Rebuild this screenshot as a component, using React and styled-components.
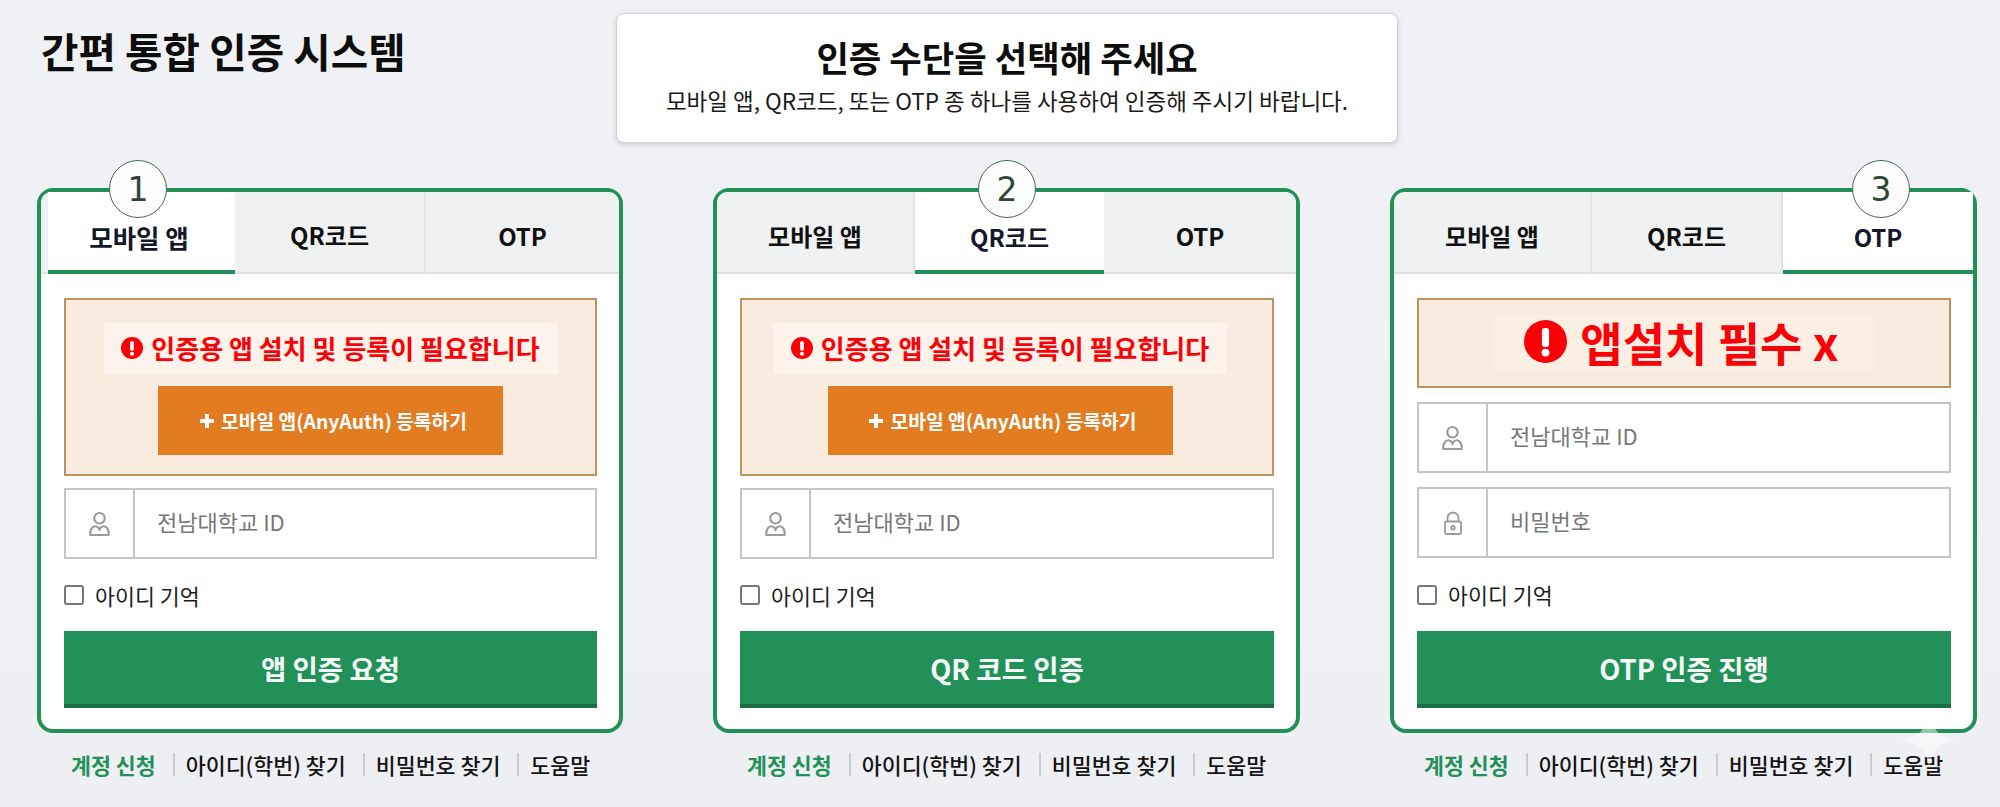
import React from "react";
import styled, { createGlobalStyle } from "styled-components";

const Global = createGlobalStyle`
  html, body { margin: 0; padding: 0; background: #eff0f3; }
  body { font-family: "Noto Sans CJK KR", "Noto Sans", sans-serif; overflow: hidden; }
  * { box-sizing: border-box; }
`;

const Page = styled.div`
  position: relative;
  width: 2000px;
  height: 807px;
  padding: 13px 23px 0 37px;
  background: linear-gradient(180deg, #f0f1f4 0%, #eeeff2 100%);
`;

const Header = styled.header`
  display: grid;
  grid-template-columns: 579px 782px;
  height: 175px;
  align-items: start;
`;

const PageTitle = styled.h1`
  margin: 13px 0 0 4px;
  font-size: 40.7px;
  line-height: 50px;
  font-weight: 700;
  color: #0d0d0d;
`;

const Notice = styled.div`
  height: 130px;
  background: #fff;
  border: 1px solid #d0d1d6;
  border-radius: 8px;
  box-shadow: 0 2px 5px rgba(60, 60, 70, 0.18);
  text-align: center;
  padding-top: 19px;
`;

const NoticeTitle = styled.h2`
  margin: 0;
  font-size: 35.3px;
  line-height: 48px;
  font-weight: 700;
  color: #0d0d0d;
`;

const NoticeText = styled.p`
  margin: 3px 0 0;
  font-size: 22.5px;
  line-height: 32px;
  font-weight: 400;
  color: #1a1a1a;
`;

const Columns = styled.div`
  display: grid;
  grid-template-columns: 586px 587px 587px;
  column-gap: 90px;
`;

const Card = styled.section`
  position: relative;
  height: 545px;
  background: #fff;
  border: 4px solid #23905a;
  border-radius: 16px;
  display: flex;
  flex-direction: column;
`;

const Badge = styled.div`
  position: absolute;
  top: -32px;
  left: ${(p) => p.$x - 33}px;
  width: 58px;
  height: 58px;
  border-radius: 50%;
  background: #fbfcfb;
  border: 1.5px solid #4d6558;
  color: #2c4639;
  font-family: "DejaVu Sans", sans-serif;
  font-size: 33px;
  display: flex;
  align-items: center;
  justify-content: center;
  z-index: 2;
`;

const Tabs = styled.div`
  display: grid;
  grid-template-columns: ${(p) => p.$cols};
  height: 82px;
  background: #f0f1f3;
  border-radius: 10px 10px 0 0;
  padding-left: ${(p) => p.$inset}px;
  box-shadow: inset 0 -2px 0 #e0e1e4;
`;

const Tab = styled.div`
  display: flex;
  align-items: center;
  justify-content: center;
  padding-top: ${(p) => (p.$raised ? 2 : p.$active ? 11 : 5)}px;
  padding-right: ${(p) => (p.$big ? 5 : 0)}px;
  font-size: ${(p) => (p.$big ? 25.5 : 24)}px;
  font-weight: 700;
  color: ${(p) => (p.$active ? "#14182a" : "#111")};
  background: ${(p) => (p.$active ? "#fff" : "transparent")};
  border-right: ${(p) => (p.$last || p.$active ? "none" : "2px solid #e2e3e6")};
  border-bottom: ${(p) => (p.$active ? "4px solid #23905a" : "none")};
`;

const Panel = styled.div`
  flex: 1;
  display: flex;
  flex-direction: column;
  padding: 24px 22px 21px 23px;
`;

const Alert = styled.div`
  height: ${(p) => (p.$large ? 90 : 178)}px;
  margin-bottom: ${(p) => (p.$large ? 14 : 12)}px;
  background: #faebdf;
  border: 2px solid #bb9560;
  display: flex;
  flex-direction: column;
  align-items: center;
  padding-top: ${(p) => (p.$large ? 15 : 23)}px;
  padding-right: ${(p) => p.$shift || 0}px;
`;

const AlertNote = styled.div`
  display: flex;
  align-items: center;
  justify-content: center;
  gap: ${(p) => (p.$large ? 13 : 8)}px;
  width: ${(p) => (p.$large ? 380 : 454)}px;
  height: ${(p) => (p.$large ? 56 : 51)}px;
  padding-bottom: ${(p) => (p.$large ? 4 : 2)}px;
  padding-right: ${(p) => (p.$large ? 5 : 0)}px;
  background: ${(p) => (p.$large ? "#fbeee3" : "#fdf3ea")};
  color: #fb0007;
  font-size: ${(p) => (p.$large ? 46 : 26)}px;
  font-weight: 700;
  white-space: nowrap;
`;

const RegisterButton = styled.div`
  margin-top: 12px;
  width: 345px;
  height: 69px;
  padding-left: 5px;
  background: #e37b20;
  color: #fff;
  font-size: 19.3px;
  font-weight: 700;
  display: flex;
  align-items: center;
  justify-content: center;
  gap: 6px;
`;

const Field = styled.div`
  display: grid;
  grid-template-columns: 69px 1fr;
  height: 71px;
  margin-bottom: ${(p) => (p.$stacked ? 14 : 0)}px;
  background: #fff;
  border: 2px solid #c4c5ca;
`;

const FieldIcon = styled.div`
  display: flex;
  align-items: center;
  justify-content: center;
  border-right: 2px solid #c4c5ca;
  color: #9a9a9e;
`;

const FieldText = styled.div`
  display: flex;
  align-items: center;
  padding: 0 0 5px 22px;
  font-size: 22px;
  font-weight: 400;
  color: #77777a;
`;

const Remember = styled.label`
  flex: 1;
  display: flex;
  align-items: center;
  gap: 11px;
  font-size: 21.7px;
  color: #1c1c1c;
`;

const Box = styled.span`
  width: 20px;
  height: 20px;
  background: #fff;
  border: 2px solid #77777a;
  border-radius: 3px;
`;

const Submit = styled.div`
  height: 77px;
  background: #229158;
  border-bottom: 4px solid #1d6d47;
  color: #f4faf6;
  font-size: 27.5px;
  font-weight: 700;
  display: flex;
  align-items: center;
  justify-content: center;
`;

const Links = styled.nav`
  display: flex;
  align-items: center;
  height: 24px;
  margin-top: 19px;
  padding-left: 34px;
  font-size: 21.7px;
  font-weight: 500;
  color: #141414;
  white-space: nowrap;
`;

const Signup = styled.span`
  color: #23905a;
  font-weight: 700;
`;

const Sep = styled.i`
  width: 2px;
  height: 23px;
  background: #cbccd0;
  margin: 0 11px 0 17px;
`;

const Sparkle = styled.svg`
  position: absolute;
  left: 1901px;
  top: 712px;
  opacity: 0.5;
`;

const WarnIcon = ({ size }) => (
  <svg width={size} height={size} viewBox="0 0 24 24">
    <circle cx="12" cy="12" r="12" fill="#fb0007" />
    <rect x="10" y="4.5" width="4" height="10.5" rx="1.6" fill="#fff" />
    <circle cx="12" cy="18.2" r="2.2" fill="#fff" />
  </svg>
);

const PlusIcon = () => (
  <svg width="16" height="16" viewBox="0 0 16 16">
    <path d="M6 1h4v5h5v4h-5v5H6v-5H1V6h5z" fill="#fff" />
  </svg>
);

const PersonIcon = () => (
  <svg width="21" height="24" viewBox="0 0 20 23" fill="none" stroke="currentColor" strokeWidth="2">
    <circle cx="10" cy="6" r="5" />
    <path d="M1.2 22C.8 17 3 13.6 6 13.6c2 0 4 2 4 3.9 0-1.9 2-3.9 4-3.9 3 0 5.200 3.400 4.800 8.400z" strokeLinejoin="round" />
  </svg>
);

const LockIcon = () => (
  <svg width="18" height="24" viewBox="0 0 18 24" fill="none" stroke="currentColor" strokeWidth="1.8">
    <path d="M3.500 10.500V7a5.500 5.500 0 0 1 11 0v3.500" />
    <rect x="1" y="10.500" width="16" height="12.500" rx="1.500" />
    <circle cx="9" cy="16.800" r="1.800" />
  </svg>
);

const tabNames = ["모바일 앱", "QR코드", "OTP"];

const cards = [
  { num: 1, badgeX: 101, active: 0, cols: "187px 191px 1fr", inset: 7, raised: 1, big: 0, submit: "앱 인증 요청" },
  { num: 2, badgeX: 294, active: 1, cols: "198px 189px 1fr", inset: 0, shift: 14, submit: "QR 코드 인증" },
  { num: 3, badgeX: 491, active: 2, cols: "198px 191px 1fr", inset: 0, submit: "OTP 인증 진행", otp: true },
];

function AuthCard({ card }) {
  return (
    <div>
      <Card>
        <Badge $x={card.badgeX}>{card.num}</Badge>
        <Tabs $cols={card.cols} $inset={card.inset}>
          {tabNames.map((name, i) => (
            <Tab
              key={name}
              $active={i === card.active}
              $last={i === 2}
              $raised={i === card.raised}
              $big={i === card.big}
            >
              {name}
            </Tab>
          ))}
        </Tabs>
        <Panel>
          {card.otp ? (
            <Alert $large>
              <AlertNote $large>
                <WarnIcon size={43} />
                앱설치 필수 x
              </AlertNote>
            </Alert>
          ) : (
            <Alert $shift={card.shift}>
              <AlertNote>
                <WarnIcon size={22} />
                인증용 앱 설치 및 등록이 필요합니다
              </AlertNote>
              <RegisterButton>
                <PlusIcon />
                모바일 앱(AnyAuth) 등록하기
              </RegisterButton>
            </Alert>
          )}
          <Field $stacked={card.otp}>
            <FieldIcon><PersonIcon /></FieldIcon>
            <FieldText>전남대학교 ID</FieldText>
          </Field>
          {card.otp && (
            <Field>
              <FieldIcon><LockIcon /></FieldIcon>
              <FieldText>비밀번호</FieldText>
            </Field>
          )}
          <Remember>
            <Box />
            아이디 기억
          </Remember>
          <Submit>{card.submit}</Submit>
        </Panel>
      </Card>
      <Links>
        <Signup>계정 신청</Signup>
        <Sep />
        아이디(학번) 찾기
        <Sep />
        비밀번호 찾기
        <Sep />
        도움말
      </Links>
    </div>
  );
}

export default function App() {
  return (
    <Page>
      <Global />
      <Header>
        <PageTitle>간편 통합 인증 시스템</PageTitle>
        <Notice>
          <NoticeTitle>인증 수단을 선택해 주세요</NoticeTitle>
          <NoticeText>모바일 앱, QR코드, 또는 OTP 종 하나를 사용하여 인증해 주시기 바랍니다.</NoticeText>
        </Notice>
      </Header>
      <Columns>
        {cards.map((card) => (
          <AuthCard key={card.num} card={card} />
        ))}
      </Columns>
      <Sparkle width="56" height="56" viewBox="0 0 56 56">
        <path d="M28 0C30 17 39 26 56 28 39 30 30 39 28 56 26 39 17 30 0 28 17 26 26 17 28 0z" fill="#fff" />
      </Sparkle>
    </Page>
  );
}
